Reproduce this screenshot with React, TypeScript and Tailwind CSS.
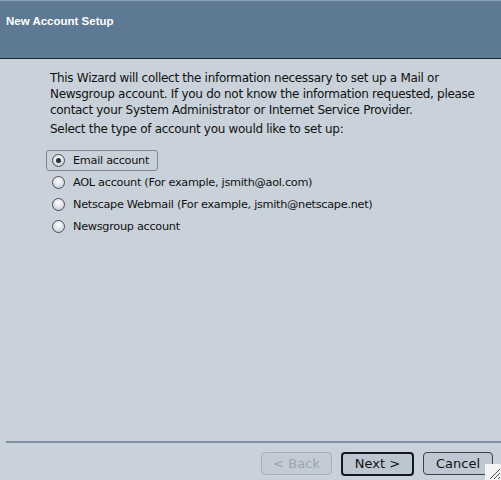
import React, { useState } from 'react';

const options = [
    'Email account',
    'AOL account (For example, jsmith@aol.com)',
    'Netscape Webmail (For example, jsmith@netscape.net)',
    'Newsgroup account',
];

const Radio: React.FC<{ checked: boolean }> = ({ checked }) => (
    <span className="w-[13px] h-[13px] rounded-full border border-[#4a4f57] bg-[radial-gradient(circle_at_50%_35%,#ffffff,#d8dde4_60%,#b9c0ca)] flex items-center justify-center shrink-0">
        {checked && <span className="w-[5px] h-[5px] rounded-full bg-[#2b2f36]" />}
    </span>
);

export default function App() {
    const [selected, setSelected] = useState(0);

    return (
        <div className="w-[501px] h-[480px] bg-[#c9d1da] flex flex-col overflow-hidden relative font-['DejaVu_Sans',sans-serif] text-[12px] text-[#111]">
            <div className="h-[59px] shrink-0 bg-[#5e7993] border-t border-t-[#8da0b6] border-b border-b-[#1c2530] px-[6px] pt-[11px]">
                <span className="text-white font-bold text-[11.5px] font-['Liberation_Sans',sans-serif]">New Account Setup</span>
            </div>

            <div className="flex-1 pl-[50px] pr-[10px] pt-[11px]">
                <p className="leading-[16px] tracking-[-0.3px]">
                    This Wizard will collect the information necessary to set up a Mail or Newsgroup account. If you do not know the information requested, please contact your System Administrator or Internet Service Provider.
                </p>
                <p className="leading-[16px] mt-[3px] tracking-[-0.3px]">Select the type of account you would like to set up:</p>

                <div className="mt-[13px] -ml-[4px] flex flex-col gap-[1px]">
                    {options.map((label, i) => (
                        <button
                            key={label}
                            onClick={() => setSelected(i)}
                            className={`self-start flex items-center gap-[8px] h-[21px] pl-[5px] pr-[8px] rounded-[3px] border ${i === selected ? 'border-[#7d8896]' : 'border-transparent'}`}
                        >
                            <Radio checked={i === selected} />
                            <span className="leading-none text-[11.3px] tracking-[-0.3px]">{label}</span>
                        </button>
                    ))}
                </div>
            </div>

            <div className="ml-[6px] h-[2px] bg-[#808fa2] shrink-0" />

            <div className="h-[37px] shrink-0 flex justify-end items-start gap-[9px] pr-[8px] pt-[9px] text-[13px]">
                <button disabled className="w-[71px] h-[23px] rounded-[4px] border border-[#a7b1bd] bg-[#c3ccd6] text-[#9aa4b0]">
                    &lt; Back
                </button>
                <button className="w-[73px] h-[24px] rounded-[4px] border-2 border-[#15191f] bg-[#bcc6d1]">
                    Next &gt;
                </button>
                <button className="w-[70px] h-[23px] rounded-[4px] border border-[#39414b] bg-[#bfc8d2]">
                    Cancel
                </button>
            </div>

            <div className="absolute right-0 bottom-0 w-[16px] h-[16px] bg-[#f2f4f6]">
                <svg width="16" height="16" viewBox="0 0 16 16">
                    <path d="M15 5 L5 15 M15 9 L9 15 M15 13 L13 15" stroke="#555" strokeWidth="1" />
                </svg>
            </div>
        </div>
    );
}
